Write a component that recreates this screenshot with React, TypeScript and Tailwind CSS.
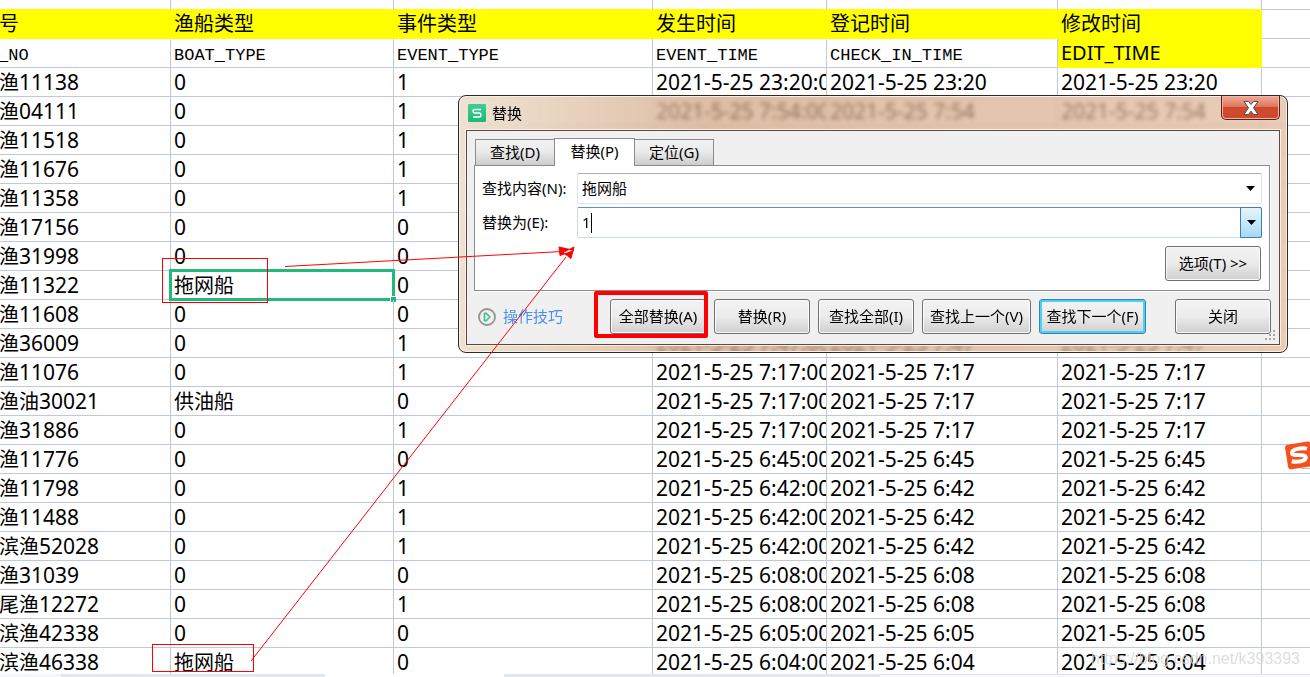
import { useState } from 'react';
import clsx from 'clsx';

type Row = {
  prefix: string;
  no: string;
  boat: string;
  event: string;
  eventTime?: string;
  time?: string;
};

const rows: Row[] = [
  { prefix: '渔', no: '11138', boat: '0', event: '1', eventTime: '2021-5-25 23:20:00', time: '2021-5-25 23:20' },
  { prefix: '渔', no: '04111', boat: '0', event: '1', eventTime: '2021-5-25 7:54:00', time: '2021-5-25 7:54' },
  { prefix: '渔', no: '11518', boat: '0', event: '1' },
  { prefix: '渔', no: '11676', boat: '0', event: '1' },
  { prefix: '渔', no: '11358', boat: '0', event: '1' },
  { prefix: '渔', no: '17156', boat: '0', event: '0' },
  { prefix: '渔', no: '31998', boat: '0', event: '0' },
  { prefix: '渔', no: '11322', boat: '拖网船', event: '0' },
  { prefix: '渔', no: '11608', boat: '0', event: '0' },
  { prefix: '渔', no: '36009', boat: '0', event: '1', eventTime: '2021-5-25 7:47:00', time: '2021-5-25 7:47' },
  { prefix: '渔', no: '11076', boat: '0', event: '1', eventTime: '2021-5-25 7:17:00', time: '2021-5-25 7:17' },
  { prefix: '渔油', no: '30021', boat: '供油船', event: '0', eventTime: '2021-5-25 7:17:00', time: '2021-5-25 7:17' },
  { prefix: '渔', no: '31886', boat: '0', event: '1', eventTime: '2021-5-25 7:17:00', time: '2021-5-25 7:17' },
  { prefix: '渔', no: '11776', boat: '0', event: '0', eventTime: '2021-5-25 6:45:00', time: '2021-5-25 6:45' },
  { prefix: '渔', no: '11798', boat: '0', event: '1', eventTime: '2021-5-25 6:42:00', time: '2021-5-25 6:42' },
  { prefix: '渔', no: '11488', boat: '0', event: '1', eventTime: '2021-5-25 6:42:00', time: '2021-5-25 6:42' },
  { prefix: '滨渔', no: '52028', boat: '0', event: '1', eventTime: '2021-5-25 6:42:00', time: '2021-5-25 6:42' },
  { prefix: '渔', no: '31039', boat: '0', event: '0', eventTime: '2021-5-25 6:08:00', time: '2021-5-25 6:08' },
  { prefix: '尾渔', no: '12272', boat: '0', event: '1', eventTime: '2021-5-25 6:08:00', time: '2021-5-25 6:08' },
  { prefix: '滨渔', no: '42338', boat: '0', event: '0', eventTime: '2021-5-25 6:05:00', time: '2021-5-25 6:05' },
  { prefix: '滨渔', no: '46338', boat: '拖网船', event: '0', eventTime: '2021-5-25 6:04:00', time: '2021-5-25 6:04' },
];

const SELECTED = 7;

const cell = 'h-[29px] border-r border-b border-[#c0c8dc] p-0 pl-[3px] text-left font-normal whitespace-nowrap';
const title = 'h-[29px] border-r border-b border-[#ffff00] bg-[#ffff00] p-0 pl-[3px] text-left text-xl leading-6 font-normal whitespace-nowrap';
const field =
  "h-[29px] border-r border-b border-[#c0c8dc] p-0 pt-1.5 pl-[3px] text-left align-top font-['Liberation_Mono',monospace] text-[17px] leading-[22px] font-normal whitespace-nowrap";
const blank = 'h-[10px] border-r border-b border-r-[#c0c8dc] border-b-[#ffff00] p-0';

function Sheet() {
  return (
    <table className="w-full table-fixed border-separate border-spacing-0 text-[21px] leading-6">
      <colgroup>
        <col className="w-[171px]" />
        <col className="w-[223px]" />
        <col className="w-[259px]" />
        <col className="w-[174px]" />
        <col className="w-[231px]" />
        <col className="w-[204px]" />
        <col />
      </colgroup>
      <thead>
        <tr>
          {[0, 1, 2, 3, 4, 5].map((i) => (
            <td key={i} className={blank} />
          ))}
          <td className="border-b border-[#c0c8dc] p-0" />
        </tr>
        <tr>
          <th className={clsx(title, '-indent-1')}>号</th>
          <th className={title}>渔船类型</th>
          <th className={title}>事件类型</th>
          <th className={title}>发生时间</th>
          <th className={title}>登记时间</th>
          <th className={title}>修改时间</th>
          <td className="border-b border-[#c0c8dc] p-0" />
        </tr>
        <tr>
          <th className={clsx(field, '-indent-[5px]')}>_NO</th>
          <th className={field}>BOAT_TYPE</th>
          <th className={field}>EVENT_TYPE</th>
          <th className={field}>EVENT_TIME</th>
          <th className={field}>CHECK_IN_TIME</th>
          <th className={title}>EDIT_TIME</th>
          <td className="border-b border-[#c0c8dc] p-0" />
        </tr>
      </thead>
      <tbody>
        {rows.map((row, i) => (
          <tr key={row.no}>
            <td className={clsx(cell, '-indent-1')}>
              <span className="text-xl leading-6">{row.prefix}</span>
              {row.no}
            </td>
            <td className={clsx(cell, 'relative')}>
              {row.boat === '0' ? row.boat : <span className="text-xl leading-6">{row.boat}</span>}
              {i === SELECTED && (
                <span className="absolute -inset-0.5 border-[3px] border-[#21b97c]">
                  <span className="absolute -right-1 -bottom-1 size-1.5 border-t border-l border-white bg-[#21b97c]" />
                </span>
              )}
            </td>
            <td className={cell}>{row.event}</td>
            <td className={clsx(cell, 'overflow-hidden')}>{row.eventTime}</td>
            <td className={cell}>{row.time}</td>
            <td className={cell}>{row.time}</td>
            <td className="border-b border-[#c0c8dc] p-0" />
          </tr>
        ))}
      </tbody>
    </table>
  );
}

const button =
  'h-[35px] shrink-0 rounded-[3px] border bg-linear-to-b from-[#f3f3f3] from-0% via-[#ebebeb] via-50% to-[#cfcfcf] text-center whitespace-nowrap';

function Button({ label, width, primary }: { label: string; width: string; primary?: boolean }) {
  return (
    <button
      type="button"
      className={clsx(
        button,
        width,
        primary ? 'border-[#3c7fb1] shadow-[inset_0_0_0_2px_#48d1f5]' : 'border-[#707070] shadow-[inset_0_0_0_1px_#fafafa]',
      )}
    >
      {label}
    </button>
  );
}

function Caret() {
  return (
    <svg width="9" height="5" viewBox="0 0 9 5" aria-hidden="true">
      <path d="M0 0h9L4.5 5z" fill="#000" />
    </svg>
  );
}

function ReplaceDialog() {
  const [find, setFind] = useState('拖网船');
  const [replace, setReplace] = useState('1');

  return (
    <div
      role="dialog"
      aria-label="替换"
      className="absolute top-[95px] left-[458px] w-[830px] overflow-hidden rounded-lg border border-[#2f2925] bg-linear-to-r from-[#eadcc8]/80 via-[#d0a27e]/70 via-30% to-[#deb697]/70 text-[15px] shadow-[inset_0_0_0_1px_#fbeee2] backdrop-blur-[2px]"
    >
      <div className="flex h-[34px] items-start justify-between pr-[7px] pl-[9px]">
        <div className="flex h-full items-center gap-1.5">
          <svg width="18" height="18" viewBox="0 0 18 18" aria-hidden="true">
            <defs>
              <linearGradient id="wps" x1="0" y1="0" x2="0" y2="1">
                <stop offset="0" stopColor="#3fcf95" />
                <stop offset="1" stopColor="#1fb877" />
              </linearGradient>
            </defs>
            <rect width="18" height="18" rx="1" fill="url(#wps)" />
            <path d="M13 5.5H6.5Q5 5.5 5 7T6.500 9H11.500Q13 9.200 13 11T11.500 13H5" fill="none" stroke="#fff" strokeWidth="1.500" />
          </svg>
          <span>替换</span>
        </div>
        <button
          type="button"
          aria-label="关闭"
          className="flex h-6 w-[59px] items-center justify-center rounded-b-[5px] border border-t-0 border-[#5c2018] bg-linear-to-b from-[#f0a89a] from-0% via-[#e07860] via-45% to-[#cf4a2c] to-50% shadow-[inset_0_0_0_1px_#f2b5a8]"
        >
          <svg width="16" height="14" viewBox="0 0 16 14" aria-hidden="true">
            <path d="M1 .5h4.500L8 3.500 10.500.5H15L10.500 6.800 15 13.500h-4.500L8 10.200l-2.500 3.300H1l4.500-6.700z" fill="#fff" stroke="#4c4f5e" />
          </svg>
        </button>
      </div>

      <div className="relative mx-[7px] mb-[7px] border border-[#5a4a42] bg-[#f0f0f0] pt-[7px] pr-[9px] pb-2.5 pl-[7px] outline outline-[#fbeee2]">
        <div role="tablist" className="relative z-10 -mb-px flex items-end pl-px">
          <button
            type="button"
            role="tab"
            aria-selected="false"
            className="mb-px h-[26px] w-[79px] border border-r-0 border-b-0 border-[#898c95] bg-linear-to-b from-[#f2f2f2] via-[#ebebeb] via-45% to-[#cdcdcd]"
          >
            查找(D)
          </button>
          <button type="button" role="tab" aria-selected="true" className="h-7 w-[81px] border border-b-0 border-[#898c95] bg-white pb-0.5">
            替换(P)
          </button>
          <button
            type="button"
            role="tab"
            aria-selected="false"
            className="mb-px h-[26px] w-[79px] border border-b-0 border-l-0 border-[#898c95] bg-linear-to-b from-[#f2f2f2] via-[#ebebeb] via-45% to-[#cdcdcd]"
          >
            定位(G)
          </button>
        </div>

        <div className="flex flex-col border border-[#898c95] bg-white px-[7px] pt-[7px] pb-[9px] shadow-[1px_1px_0_#fff]">
          <div className="flex items-center">
            <label htmlFor="find" className="w-[95px] shrink-0 whitespace-nowrap">
              查找内容(N):
            </label>
            <div className="flex h-[31px] flex-1 rounded-xs border border-[#e2e3ea] border-t-[#abadb3]">
              <input
                id="find"
                className="min-w-0 flex-1 px-1 outline-none"
                value={find}
                onChange={(e) => setFind(e.target.value)}
              />
              <button type="button" aria-label="查找内容列表" className="flex w-[21px] items-center justify-center">
                <Caret />
              </button>
            </div>
          </div>
          <div className="mt-[3px] flex items-center">
            <label htmlFor="replace" className="w-[95px] shrink-0 whitespace-nowrap">
              替换为(E):
            </label>
            <div className="relative flex h-[31px] flex-1 rounded-xs border border-[#c5daed] border-t-[#5794bf]">
              <input
                id="replace"
                className="min-w-0 flex-1 px-1 outline-none"
                value={replace}
                onChange={(e) => setReplace(e.target.value)}
              />
              <span className="absolute top-[5px] left-[13px] h-5 w-px bg-black" />
              <button
                type="button"
                aria-label="替换为列表"
                className="-m-px flex w-[22px] items-center justify-center rounded-r-xs border border-[#3c7fb1] bg-linear-to-b from-[#e5f4fc] via-[#c9e9fa] via-50% to-[#a4d8f5]"
              >
                <Caret />
              </button>
            </div>
          </div>
          <div className="mt-2 flex justify-end pr-px">
            <Button label="选项(T) >>" width="w-24" />
          </div>
        </div>

        <div className="mt-2 flex items-center gap-2">
          <a href="#tips" className="mr-auto flex items-center gap-1.5 pl-[3px] text-[#4a90f0]">
            <svg width="20" height="20" viewBox="0 0 20 20" fill="none" aria-hidden="true">
              <circle cx="10" cy="10" r="8" stroke="#949494" strokeWidth="1.800" />
              <path d="M7.500 6.200v7.600h1.500l4-3.800-4-3.800z" stroke="#3cc48c" strokeWidth="1.600" strokeLinejoin="round" />
            </svg>
            操作技巧
          </a>
          <div className="relative">
            <Button label="全部替换(A)" width="w-24" />
            <span className="pointer-events-none absolute -top-2 -right-0.5 -bottom-1 -left-4 rounded-xs border-4 border-[#ff0000]" />
          </div>
          <Button label="替换(R)" width="w-24" />
          <Button label="查找全部(I)" width="w-24" />
          <Button label="查找上一个(V)" width="w-[109px]" />
          <Button label="查找下一个(F)" width="w-[107px]" primary />
          <div className="-mr-px ml-[21px]">
            <Button label="关闭" width="w-24" />
          </div>
        </div>

        <svg className="absolute right-0.5 bottom-0.5" width="12" height="12" viewBox="0 0 12 12" fill="#a8a8a8" aria-hidden="true">
          <path d="M8 0h2v2H8zM8 4h2v2H8zM4 4h2v2H4zM8 8h2v2H8zM4 8h2v2H4zM0 8h2v2H0z" />
        </svg>
      </div>
    </div>
  );
}

function Annotations() {
  return (
    <svg className="pointer-events-none absolute inset-0 size-full" fill="none" stroke="#ff0000" aria-hidden="true">
      <rect x="162.500" y="258.500" width="105" height="44" />
      <rect x="152.500" y="644.500" width="101" height="27" />
      <path d="M285 266.500L562 251.500M251 661L566 257" />
      <path d="M559 247L574 250.500 560 255.500zM574 247L563 252.500 571 258.500z" fill="#ff0000" />
    </svg>
  );
}

function InputMethodBadge() {
  return (
    <svg className="absolute top-[440px] left-[1283px]" width="27" height="32" viewBox="0 0 27 32" fill="none" aria-hidden="true">
      <path d="M18 28.500H27" stroke="#b9b9b9" />
      <g transform="rotate(-9 16 16)">
        <rect x="3.500" y="3" width="26" height="25" rx="3" fill="#f4511e" />
        <path d="M25 10C20 8 10 8 9.500 12C9 16 23 14 22.500 18.500C22 22.500 13 22 8 20" stroke="#fff" strokeWidth="4" />
      </g>
    </svg>
  );
}

export default function App() {
  return (
    <div className="relative flex h-screen flex-col overflow-hidden bg-white font-['Noto_Sans','Noto_Sans_CJK_SC',sans-serif] text-black">
      <div className="min-h-0 flex-1 overflow-hidden">
        <Sheet />
      </div>
      <div className="flex h-[3px] shrink-0">
        <div className="w-[61px] bg-[#f5f6fa]" />
        <div className="w-[264px] bg-[#e4e6ed]" />
        <div className="ml-[179px] w-[376px] bg-[#e4e6ed]" />
        <div className="flex-1 border-t border-[#dfe1ea] bg-[#f8f8fb]" />
      </div>
      <ReplaceDialog />
      <InputMethodBadge />
      <Annotations />
      <span className="absolute right-2.5 bottom-2 font-['Liberation_Sans',sans-serif] text-base leading-5 text-[#d4d4d4]/80">
        https://blog.csdn.net/k393393
      </span>
    </div>
  );
}
